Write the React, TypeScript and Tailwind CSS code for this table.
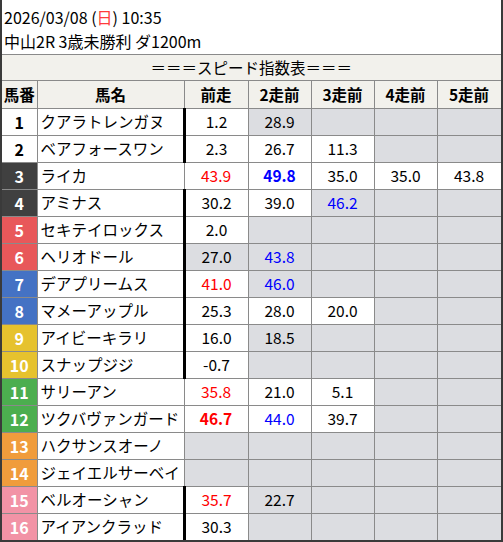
type Cell = { v?: string; c?: 'r' | 'b' | 'rb' | 'bb'; g?: boolean };
type Row = { no: number; name: string; cls: string; bar: boolean; cells: Cell[] };

const E: Cell = { g: true };

const rows: Row[] = [
  { no: 1, name: 'クアラトレンガヌ', cls: 'bg-white text-black', bar: true, cells: [{ v: '1.2' }, { v: '28.9', g: true }, E, E, E] },
  { no: 2, name: 'ベアフォースワン', cls: 'bg-white text-black', bar: true, cells: [{ v: '2.3' }, { v: '26.7' }, { v: '11.3' }, E, E] },
  { no: 3, name: 'ライカ', cls: 'bg-[#404040] text-white', bar: false, cells: [{ v: '43.9', c: 'r' }, { v: '49.8', c: 'bb' }, { v: '35.0' }, { v: '35.0' }, { v: '43.8' }] },
  { no: 4, name: 'アミナス', cls: 'bg-[#404040] text-white', bar: true, cells: [{ v: '30.2' }, { v: '39.0' }, { v: '46.2', c: 'b', g: true }, E, E] },
  { no: 5, name: 'セキテイロックス', cls: 'bg-[#e8585a] text-white', bar: true, cells: [{ v: '2.0' }, E, E, E, E] },
  { no: 6, name: 'ヘリオドール', cls: 'bg-[#e8585a] text-white', bar: true, cells: [{ v: '27.0', g: true }, { v: '43.8', c: 'b', g: true }, E, E, E] },
  { no: 7, name: 'デアプリームス', cls: 'bg-[#4472c4] text-white', bar: true, cells: [{ v: '41.0', c: 'r' }, { v: '46.0', c: 'b', g: true }, E, E, E] },
  { no: 8, name: 'マメーアップル', cls: 'bg-[#4472c4] text-white', bar: true, cells: [{ v: '25.3' }, { v: '28.0' }, { v: '20.0' }, E, E] },
  { no: 9, name: 'アイビーキラリ', cls: 'bg-[#e6c22e] text-white', bar: true, cells: [{ v: '16.0' }, { v: '18.5', g: true }, E, E, E] },
  { no: 10, name: 'スナップジジ', cls: 'bg-[#e6c22e] text-white', bar: true, cells: [{ v: '-0.7' }, E, E, E, E] },
  { no: 11, name: 'サリーアン', cls: 'bg-[#4cae4f] text-white', bar: false, cells: [{ v: '35.8', c: 'r' }, { v: '21.0' }, { v: '5.1' }, E, E] },
  { no: 12, name: 'ツクバヴァンガード', cls: 'bg-[#4cae4f] text-white', bar: false, cells: [{ v: '46.7', c: 'rb' }, { v: '44.0', c: 'b' }, { v: '39.7' }, E, E] },
  { no: 13, name: 'ハクサンスオーノ', cls: 'bg-[#f09c3c] text-white', bar: false, cells: [E, E, E, E, E] },
  { no: 14, name: 'ジェイエルサーベイ', cls: 'bg-[#f09c3c] text-white', bar: false, cells: [E, E, E, E, E] },
  { no: 15, name: 'ベルオーシャン', cls: 'bg-[#f293a6] text-white', bar: true, cells: [{ v: '35.7', c: 'r' }, { v: '22.7', g: true }, E, E, E] },
  { no: 16, name: 'アイアンクラッド', cls: 'bg-[#f293a6] text-white', bar: true, cells: [{ v: '30.3' }, E, E, E, E] },
];

const tone = (c?: Cell['c']) =>
  c === 'r'
    ? 'text-[#ff0000]'
    : c === 'rb'
      ? 'text-[#ff0000] font-bold'
      : c === 'b'
        ? 'text-[#0000ff]'
        : c === 'bb'
          ? 'text-[#0000ff] font-bold'
          : 'text-black';

export default function App() {
  return (
    <div className="w-[503px] h-[542px] bg-white border-x-2 border-b-2 border-[#3a3a3a] overflow-hidden font-['Noto_Sans_CJK_JP','Noto_Sans',sans-serif] text-[15.5px] text-black">
      <div className="pt-[5px] pl-[2px] leading-[24px] text-[16px]">
        <div>
          2026/03/08 (<span className="text-[#ff3b3b]">日</span>) 10:35
        </div>
        <div>中山2R 3歳未勝利 ダ1200m</div>
      </div>
      <table className="table-fixed border-collapse w-[499px] mt-[1px]">
        <colgroup>
          <col className="w-[35px]" />
          <col className="w-[147px]" />
          <col className="w-[64px]" />
          <col className="w-[63px]" />
          <col className="w-[63px]" />
          <col className="w-[63px]" />
          <col className="w-[64px]" />
        </colgroup>
        <thead>
          <tr className="h-[26px] bg-[#f2f1ec]">
            <th colSpan={7} className="border border-[#8a8a8a] border-l-0 font-normal leading-none">
              ＝＝＝スピード指数表＝＝＝
            </th>
          </tr>
          <tr className="h-[28px] bg-[#f2f1ec] font-bold">
            <th className="border border-[#8a8a8a] border-l-0 px-0">馬番</th>
            <th className="border border-[#8a8a8a]">馬名</th>
            <th className="border border-[#8a8a8a]">前走</th>
            <th className="border border-[#8a8a8a]">2走前</th>
            <th className="border border-[#8a8a8a]">3走前</th>
            <th className="border border-[#8a8a8a]">4走前</th>
            <th className="border border-[#8a8a8a]">5走前</th>
          </tr>
        </thead>
        <tbody>
          {rows.map((r) => (
            <tr key={r.no} className="h-[27px] leading-none">
              <td className={`border border-[#8a8a8a] border-l-0 text-center font-bold text-[16px] ${r.cls}`}>{r.no}</td>
              <td className="border border-[#8a8a8a] pl-[3px] whitespace-nowrap overflow-hidden">{r.name}</td>
              {r.cells.map((c, i) => (
                <td
                  key={i}
                  className={`border border-[#8a8a8a] text-center ${c.g ? 'bg-[#dcdde1]' : 'bg-white'} ${tone(c.c)} ${
                    i === 0 && r.bar ? 'border-l-[3px] border-l-black' : ''
                  }`}
                >
                  {c.v}
                </td>
              ))}
            </tr>
          ))}
        </tbody>
      </table>
    </div>
  );
}
